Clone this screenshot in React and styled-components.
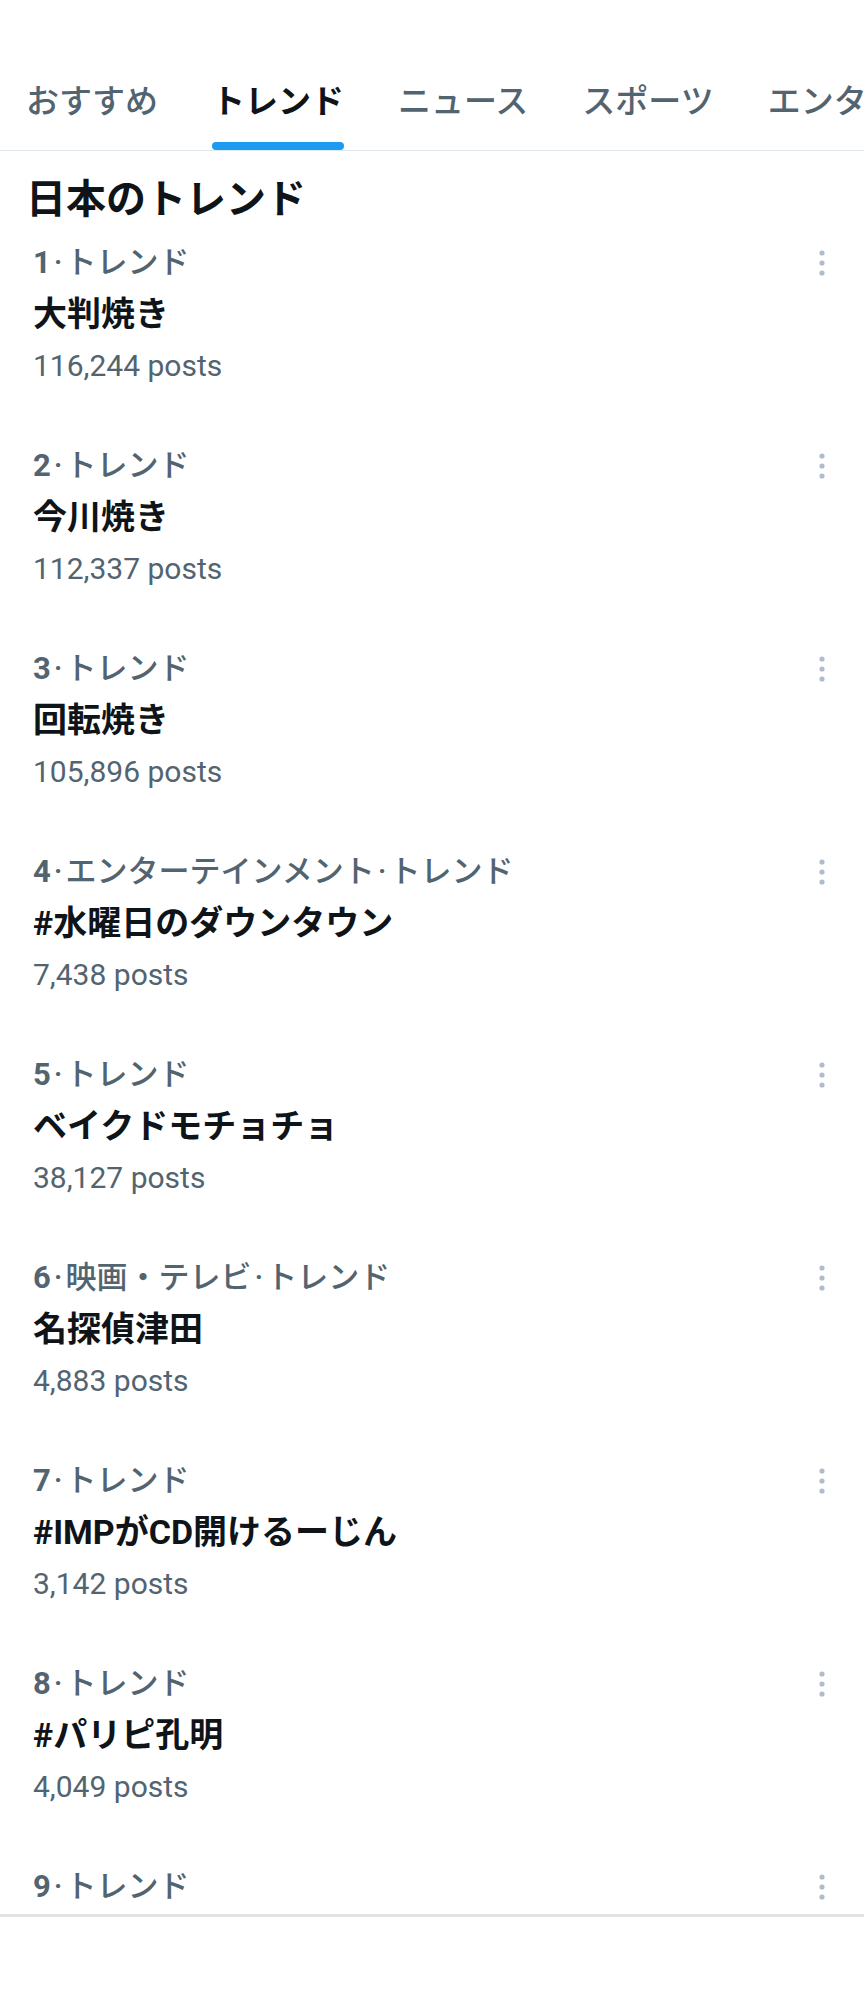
import styled, { createGlobalStyle } from "styled-components";

const GlobalStyle = createGlobalStyle`
  html, body {
    margin: 0;
    padding: 0;
    background: #ffffff;
  }
  body {
    font-family: Roboto, "Noto Sans CJK JP", sans-serif;
    color: #0f1419;
  }
`;

const trends = [
  { rank: 1, category: ["トレンド"], name: "大判焼き", posts: "116,244" },
  { rank: 2, category: ["トレンド"], name: "今川焼き", posts: "112,337" },
  { rank: 3, category: ["トレンド"], name: "回転焼き", posts: "105,896" },
  {
    rank: 4,
    category: ["エンターテインメント", "トレンド"],
    name: "#水曜日のダウンタウン",
    posts: "7,438",
  },
  { rank: 5, category: ["トレンド"], name: "ベイクドモチョチョ", posts: "38,127" },
  {
    rank: 6,
    category: ["映画・テレビ", "トレンド"],
    name: "名探偵津田",
    posts: "4,883",
  },
  { rank: 7, category: ["トレンド"], name: "#IMPがCD開けるーじん", posts: "3,142" },
  { rank: 8, category: ["トレンド"], name: "#パリピ孔明", posts: "4,049" },
  { rank: 9, category: ["トレンド"] },
];

const tabs = ["おすすめ", "トレンド", "ニュース", "スポーツ", "エンターテインメント"];

const StyledPage = styled.div`
  display: flex;
  flex-direction: column;
  width: 864px;
  height: 2016px;
  overflow: hidden;
`;

const StyledViewport = styled.main`
  height: 1914px;
  overflow: hidden;
  flex-shrink: 0;
`;

const StyledTabBar = styled.nav`
  display: flex;
  align-items: flex-end;
  gap: 54px;
  height: 150px;
  padding-left: 26px;
  border-bottom: 1px solid #e1e8ed;
  white-space: nowrap;
  overflow: hidden;
`;

const StyledTab = styled.div`
  display: inline-flex;
  flex-direction: column;
  flex-shrink: 0;
  font-size: 33px;
  line-height: 40px;
  font-weight: ${(props) => (props.$active ? 700 : 500)};
  color: ${(props) => (props.$active ? "#0f1419" : "#536471")};
`;

const StyledIndicator = styled.span`
  display: block;
  height: 8px;
  margin-top: 20px;
  border-radius: 4px;
  background-color: ${(props) => (props.$active ? "#1d9bf0" : "transparent")};
`;

const StyledHeading = styled.h2`
  margin: 25px 0 0;
  padding-left: 26px;
  font-size: 40px;
  line-height: 48px;
  font-weight: 700;
  color: #0f1419;
`;

const StyledTrendRow = styled.div`
  display: grid;
  grid-template-columns: 1fr 40px;
  align-items: start;
  padding: 19px 22px 41px 33px;
`;

const StyledTrendText = styled.div`
  display: flex;
  flex-direction: column;
  min-width: 0;
`;

const StyledMeta = styled.div`
  font-size: 31px;
  line-height: 40px;
  font-weight: 500;
  color: #536471;
  white-space: nowrap;
  & b {
    font-weight: 700;
  }
`;

const StyledDot = styled.span`
  margin: 0 3px;
`;

const StyledName = styled.div`
  margin-top: 9px;
  font-size: 34px;
  line-height: 44px;
  font-weight: 700;
  color: #0f1419;
  white-space: nowrap;
`;

const StyledPosts = styled.div`
  margin-top: 10px;
  font-size: 30px;
  line-height: 40px;
  color: #536471;
`;

const StyledMore = styled.svg`
  display: block;
  width: 40px;
  height: 40px;
  fill: #aebccb;
`;

const StyledFooter = styled.footer`
  flex: 1;
  border-top: 3px solid #e3e3e3;
  background: #ffffff;
`;

function MoreIcon() {
  return (
    <StyledMore viewBox="0 0 40 40" aria-hidden="true">
      <circle cx="20" cy="10" r="2.6" />
      <circle cx="20" cy="20" r="2.6" />
      <circle cx="20" cy="30" r="2.6" />
    </StyledMore>
  );
}

function TrendRow({ trend }) {
  return (
    <StyledTrendRow>
      <StyledTrendText>
        <StyledMeta>
          <b>{trend.rank}</b>
          {trend.category.map((part) => (
            <span key={part}>
              <StyledDot>·</StyledDot>
              {part}
            </span>
          ))}
        </StyledMeta>
        {trend.name && <StyledName>{trend.name}</StyledName>}
        {trend.posts && <StyledPosts>{trend.posts} posts</StyledPosts>}
      </StyledTrendText>
      <MoreIcon />
    </StyledTrendRow>
  );
}

export default function App() {
  return (
    <>
      <GlobalStyle />
      <StyledPage>
        <StyledViewport>
          <StyledTabBar>
            {tabs.map((tab) => (
              <StyledTab key={tab} $active={tab === "トレンド"}>
                {tab}
                <StyledIndicator $active={tab === "トレンド"} />
              </StyledTab>
            ))}
          </StyledTabBar>

          <StyledHeading>日本のトレンド</StyledHeading>

          {trends.map((trend) => (
            <TrendRow key={trend.rank} trend={trend} />
          ))}
        </StyledViewport>
        <StyledFooter />
      </StyledPage>
    </>
  );
}
